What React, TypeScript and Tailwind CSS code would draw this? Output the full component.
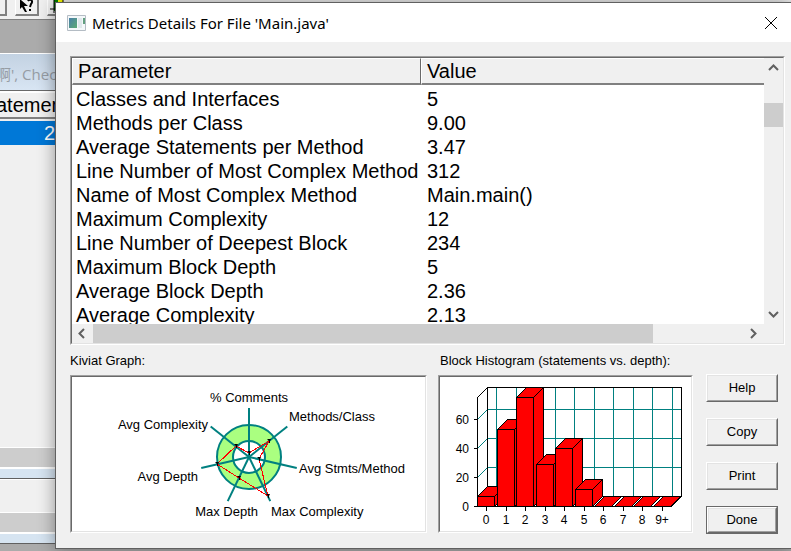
import clsx from "clsx";
import type { ReactNode } from "react";

const metrics = [
  ["Classes and Interfaces", "5"],
  ["Methods per Class", "9.00"],
  ["Average Statements per Method", "3.47"],
  ["Line Number of Most Complex Method", "312"],
  ["Name of Most Complex Method", "Main.main()"],
  ["Maximum Complexity", "12"],
  ["Line Number of Deepest Block", "234"],
  ["Maximum Block Depth", "5"],
  ["Average Block Depth", "2.36"],
  ["Average Complexity", "2.13"],
];

type Anchor = "start" | "middle" | "end";
type Axis = { label: string; value: number; x: number; y: number; anchor: Anchor };

// value is the distance from the centre, x and y place the label
const axes: Axis[] = [
  { label: "% Comments", value: 4, x: 177, y: 25, anchor: "middle" },
  { label: "Methods/Class", value: 25, x: 217, y: 44, anchor: "start" },
  { label: "Avg Stmts/Method", value: 10, x: 227, y: 96, anchor: "start" },
  { label: "Max Complexity", value: 43, x: 199, y: 139, anchor: "start" },
  { label: "Max Depth", value: 23, x: 186, y: 139, anchor: "end" },
  { label: "Avg Depth", value: 33, x: 126, y: 104, anchor: "end" },
  { label: "Avg Complexity", value: 17, x: 136, y: 52, anchor: "end" },
];

const blocks = [7, 53, 75, 29, 40, 12, 0, 0, 0, 0];

type SunkenProps = { className?: string; children: ReactNode };
function Sunken({ className, children }: SunkenProps) {
  return (
    <div
      className={clsx(
        "border border-t-[#a0a0a0] border-l-[#a0a0a0] border-r-white border-b-white",
        className
      )}
    >
      <div className="border border-t-[#696969] border-l-[#696969] border-r-[#e3e3e3] border-b-[#e3e3e3] bg-white">
        {children}
      </div>
    </div>
  );
}

function Chevron({ d, label }: { d: string; label: string }) {
  return (
    <button
      type="button"
      aria-label={label}
      className="flex size-[19px] shrink-0 items-center justify-center"
    >
      <svg width="11" height="11" viewBox="0 0 11 11" fill="none">
        <path d={d} stroke="#606060" strokeWidth="2" />
      </svg>
    </button>
  );
}

function Kiviat() {
  const cx = 177;
  const cy = 80;
  const points = axes.map((axis, i) => {
    const angle = (i * 2 * Math.PI) / axes.length;
    return {
      end: [cx + 49 * Math.sin(angle), cy - 49 * Math.cos(angle)],
      at: [
        Math.round(cx + axis.value * Math.sin(angle)),
        Math.round(cy - axis.value * Math.cos(angle)),
      ],
    };
  });

  return (
    <svg width="353" height="154" role="img" aria-label="Kiviat Graph">
      <circle cx={cx} cy={cy} r="32" fill="#aaff80" stroke="#008080" strokeWidth="2" />
      <circle cx={cx} cy={cy} r="16" fill="#fff" stroke="#008080" strokeWidth="2" />
      {points.map(({ end }, i) => (
        <line key={i} x1={cx} y1={cy} x2={end[0]} y2={end[1]} stroke="#008080" strokeWidth="2" />
      ))}
      <polygon
        points={points.map(({ at }) => at.join(",")).join(" ")}
        fill="none"
        stroke="#f00"
        shapeRendering="crispEdges"
      />
      {points.map(({ at: [x, y] }, i) => (
        <path key={i} d={`M${x - 2} ${y - 2}h4l-1 2v2h-1v-2z`} fill="#000" />
      ))}
      {axes.map((axis) => (
        <text key={axis.label} x={axis.x} y={axis.y} textAnchor={axis.anchor}>
          {axis.label}
        </text>
      ))}
    </svg>
  );
}

function Histogram() {
  const base = 129;
  const left = 37;
  const step = 19.55;

  return (
    <svg width="251" height="154" role="img" aria-label="Block Histogram">
      <g transform="translate(.5 .5)" fill="none" stroke="#000" shapeRendering="crispEdges">
        {/* grid */}
        <g stroke="#008080">
          {[20, 40, 60].map((v) => {
            const y = Math.round(base - v * 1.45);
            return <path key={v} d={`M${left} ${y}l10 -10H241`} />;
          })}
          {blocks.map((_, i) => (
            <path key={i} d={`M${Math.round(56 + i * step)} 10V119`} />
          ))}
        </g>

        {/* walls */}
        <path d="M37 129V20l10 -10H241V119l-10 10H37M47 10V119H241M37 129l10 -10" />

        {/* bars */}
        {blocks.map((value, i) => {
          const x = Math.round(left + i * step);
          const h = Math.round(value * 1.45);
          const y = base - h;
          return (
            <g key={i} fill="#f00">
              <path d={`M${x} ${y}l10 -10h17l-10 10z`} />
              {h > 0 && <path d={`M${x + 17} ${y}l10 -10v${h}l-10 10z`} />}
              {h > 0 && <path d={`M${x} ${y}h17v${h}h-17z`} />}
            </g>
          );
        })}

        {/* ticks */}
        <path d="M33 129H231" />
        {[20, 40, 60].map((v) => (
          <path key={v} d={`M33 ${Math.round(base - v * 1.45)}h4`} />
        ))}
        {blocks.map((_, i) => (
          <path key={i} d={`M${Math.round(46 + i * step)} 129v4`} />
        ))}
      </g>

      <g className="text-[12px]">
        {[0, 20, 40, 60].map((v) => (
          <text key={v} x="29" y={Math.round(base - v * 1.45) + 5} textAnchor="end">
            {v}
          </text>
        ))}
        {blocks.map((_, i) => (
          <text key={i} x={Math.round(46 + i * step)} y="147" textAnchor="middle">
            {i === 9 ? "9+" : i}
          </text>
        ))}
      </g>
    </svg>
  );
}

// windows behind the dialog
function Backdrop() {
  return (
    <div className="absolute inset-0 flex flex-col overflow-hidden bg-[#ababab]">
      <div className="flex h-5 shrink-0 items-start border-b border-[#808080] bg-[#f0f0f0]">
        <div className="h-4 w-[7px] border-r-2 border-b-2 border-[#808080]" />
        <div className="ml-2 h-4 w-6 border-r-2 border-b-2 border-l border-[#808080] border-l-white">
          <svg width="20" height="14">
            <path d="M4 0V9l2-2 3 5h2L8 6h4L5 0z" fill="#000" />
            <path d="M12 1c2-3 6 0 3 3l-1 3m0 2v2" fill="none" stroke="#000" strokeWidth="2" />
          </svg>
        </div>
        <div className="ml-2 h-4 w-6 border-b-2 border-l border-[#808080] border-l-white">
          <svg width="22" height="14">
            <path d="M6 0h4v11H6z" fill="#008000" />
            <path d="M10 0h5v2h-5z" fill="#ff0" />
            <path d="M2 9h6M6 0v13M15 0v3" stroke="#000" fill="none" />
          </svg>
        </div>
      </div>
      <div className="h-[33px] shrink-0" />
      <div className="flex h-[38px] shrink-0 items-center border-t border-b border-t-white border-b-[#696969] bg-linear-to-b from-[#c3d2e2] to-[#d8e5f3]">
        <span className="w-[60px] pt-1 font-['Open_Sans','Noto_Sans_CJK_SC',sans-serif] text-[15px] whitespace-nowrap text-[#969ca4] -indent-1">
          啊', Chec
        </span>
      </div>
      <div className="flex h-7 shrink-0 items-end border-t-2 border-b-2 border-t-white border-b-[#808080] bg-[#f0f0f0] text-[20px] leading-6 -indent-1">
        atemen
      </div>
      <div className="h-0.5 shrink-0 bg-[#f0f0f0]" />
      <div className="h-6 w-[55px] shrink-0 bg-[#0078d7] text-right text-[20px] leading-6 text-white">
        2
      </div>
      <div className="h-[302px] shrink-0 bg-[#f0f0f0]" />
      <div className="h-[22px] shrink-0 border-t border-b-2 border-white bg-[#cdcdcd]" />
      <div className="h-[10px] shrink-0 border-b border-[#606060] bg-[#d6e4f1]" />
      <div className="h-[33px] shrink-0 border-t border-white bg-[#f0f0f0]" />
      <div className="h-[22px] shrink-0 border-t border-b-2 border-white bg-[#cdcdcd]" />
      <div className="h-[10px] shrink-0 border-b border-[#606060] bg-[#d6e4f1]" />
    </div>
  );
}

type PushButtonProps = { children: ReactNode; primary?: boolean };
function PushButton({ children, primary }: PushButtonProps) {
  return (
    <button type="button" className={clsx("h-7 w-full", primary && "border border-[#696969]")}>
      <span className="block h-full border border-t-white border-r-[#696969] border-b-[#696969] border-l-white">
        <span className="flex h-full items-center justify-center border border-t-[#e3e3e3] border-r-[#a0a0a0] border-b-[#a0a0a0] border-l-[#e3e3e3]">
          {children}
        </span>
      </span>
    </button>
  );
}

export default function App() {
  return (
    <div className="relative min-h-screen overflow-hidden font-['Liberation_Sans',Arial,sans-serif] text-[13px] text-black">
      <Backdrop />

      <main className="relative mt-0.5 ml-[55px] border border-r-0 border-[#606060] bg-[#f0f0f0] shadow-[0_0_16px_rgba(0,0,0,0.4)]">
        <header className="flex h-[39px] items-center bg-white pr-3.5 pl-[11px]">
          <svg width="19" height="16">
            <defs>
              <linearGradient id="app-icon" x2="1" y2="1">
                <stop stopColor="#4a7fa8" />
                <stop offset="1" stopColor="#5bab74" />
              </linearGradient>
            </defs>
            <path d="M.5 .5h18v15H.5z" fill="#f4f8fa" stroke="#b4bcc4" />
            <path d="M2 3h8v10H2z" fill="url(#app-icon)" />
            <path d="M11 3h4v10h-4z" fill="#dfe8ec" />
            <path d="M16 3h2v6h-2z" fill="#62a080" />
          </svg>
          <h1 className="ml-1.5 font-['Noto_Sans',sans-serif] text-[15px] leading-5">
            Metrics Details For File 'Main.java'
          </h1>
          <button type="button" aria-label="Close" className="ml-auto">
            <svg width="12" height="12" viewBox="0 0 12 12">
              <path d="M0 0l12 12M12 0L0 12" stroke="#000" />
            </svg>
          </button>
        </header>

        <div className="pt-3.5 pr-1.5 pb-3.5 pl-3.5">
          {/* metrics list */}
          <Sunken>
            <div className="flex">
              <div className="h-[266px] min-w-0 flex-1 overflow-hidden">
                <table className="w-full table-fixed border-separate border-spacing-0 text-left text-[20px] leading-6">
                  <thead>
                    <tr className="bg-[#f0f0f0]">
                      <th className="h-[27px] w-[349px] border-t border-r border-b-2 border-l border-t-white border-r-[#696969] border-b-[#808080] border-l-white p-0 pl-[5px] font-normal">
                        Parameter
                      </th>
                      <th className="h-[27px] border-t border-b-2 border-l border-t-white border-b-[#808080] border-l-white p-0 pl-[5px] font-normal">
                        Value
                      </th>
                    </tr>
                  </thead>
                  <tbody className="before:block before:h-0.5 before:content-['']">
                    {metrics.map(([name, value]) => (
                      <tr key={name}>
                        <td className="p-0 pl-1 whitespace-nowrap">{name}</td>
                        <td className="p-0 pl-1.5">{value}</td>
                      </tr>
                    ))}
                  </tbody>
                </table>
              </div>
              <div className="flex w-[19px] flex-col bg-[#f0f0f0]">
                <Chevron label="Scroll up" d="M1 8l4.500-4.500L10 8" />
                <div className="mt-[26px] mb-auto h-6 bg-[#cdcdcd]" />
                <Chevron label="Scroll down" d="M1 3l4.500 4.500L10 3" />
              </div>
            </div>
            <div className="flex bg-[#f0f0f0] pr-5">
              <Chevron label="Scroll left" d="M8 1L3.500 5.500L8 10" />
              <div className="mr-auto ml-0.5 w-[81%] bg-[#cdcdcd]" />
              <Chevron label="Scroll right" d="M3 1l4.500 4.500L3 10" />
            </div>
          </Sunken>

          {/* charts and actions */}
          <div className="mt-1.5 flex pr-[7px]">
            <section className="flex-1">
              <h2 className="mb-1.5 h-[18px] leading-5">Kiviat Graph:</h2>
              <Sunken>
                <Kiviat />
              </Sunken>
            </section>
            <section className="ml-[11px]">
              <h2 className="mb-1.5 h-[18px] pl-0.5 leading-5">
                Block Histogram (statements vs. depth):
              </h2>
              <Sunken>
                <Histogram />
              </Sunken>
            </section>
            <div className="mt-[23px] ml-[13px] flex w-[72px] flex-col gap-4">
              <PushButton>Help</PushButton>
              <PushButton>Copy</PushButton>
              <PushButton>Print</PushButton>
              <PushButton primary>Done</PushButton>
            </div>
          </div>
        </div>
      </main>
    </div>
  );
}
